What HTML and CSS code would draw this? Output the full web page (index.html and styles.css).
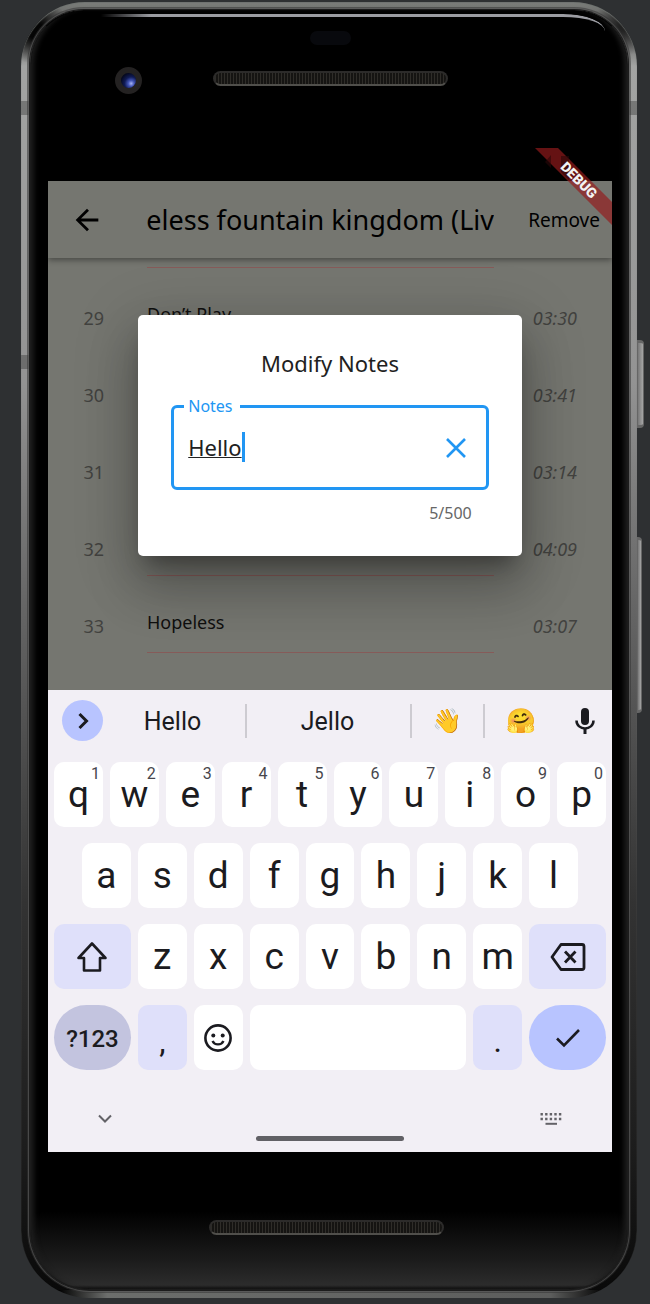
FILE: index.html
```html
<!DOCTYPE html>
<html lang="en">
<head>
<meta charset="utf-8">
<title>Modify Notes</title>
<link rel="stylesheet" href="styles.css">
</head>
<body>
<div class="phone">
  <span class="side-button power"></span>
  <span class="side-button volume"></span>
  <div class="glass">
    <div class="bezel bezel-top">
      <span class="sensor"></span>
      <span class="camera"></span>
      <span class="speaker"></span>
    </div>
    <div class="screen">
      <div class="status-bar"></div>
      <svg class="debug" viewBox="0 0 78 78" aria-label="Debug">
        <path d="M1 0H24L78 54V77Z" fill="#951a1c" fill-opacity=".68"/>
        <path d="M11 14L17 7V20ZM27 8H35V32L27 24Z" fill="#2c0608" fill-opacity=".6"/>
        <text x="45" y="37" transform="rotate(45 45 32)" text-anchor="middle">DEBUG</text>
      </svg>
      <main class="app">
        <header class="app-bar">
          <button class="back" aria-label="Back">
            <svg width="34" height="34" viewBox="0 0 24 24"><path d="M20 11H7.800l5.600-5.600L12 4l-8 8 8 8 1.400-1.400L7.800 13H20z" fill="#000"/></svg>
          </button>
          <h1 class="album"><span>eless fountain kingdom (Liv</span></h1>
          <button class="remove">Remove</button>
        </header>
        <ol class="tracks">
          <li class="track"><span class="number"></span><span class="name"></span><span class="time"></span></li>
          <li class="track"><span class="number">29</span><span class="name">Don’t Play</span><span class="time">03:30</span></li>
          <li class="track"><span class="number">30</span><span class="name"></span><span class="time">03:41</span></li>
          <li class="track"><span class="number">31</span><span class="name"></span><span class="time">03:14</span></li>
          <li class="track"><span class="number">32</span><span class="name"></span><span class="time">04:09</span></li>
          <li class="track"><span class="number">33</span><span class="name">Hopeless</span><span class="time">03:07</span></li>
        </ol>
        <div class="overlay">
          <section class="dialog" role="dialog" aria-labelledby="dialog-title">
            <h2 id="dialog-title">Modify Notes</h2>
            <div class="field">
              <label for="notes">Notes</label>
              <input id="notes" type="text" value="Hello" maxlength="500" spellcheck="false">
              <span class="caret"></span>
              <button class="clear" aria-label="Clear">
                <svg width="20" height="20" viewBox="0 0 20 20"><path d="M1 1L19 19M19 1L1 19" stroke="#2196f3" stroke-width="2.600"/></svg>
              </button>
            </div>
            <p class="counter">5/500</p>
          </section>
        </div>
      </main>
      <section class="keyboard" aria-label="Keyboard">
        <div class="suggestions">
          <button class="expand" aria-label="More"><svg width="20" height="20" viewBox="0 0 20 20"><path d="M6.500 3L13.500 10L6.500 17" fill="none" stroke="#1b1b20" stroke-width="3"/></svg></button>
          <button class="word">Hello</button>
          <button class="word split">Jello</button>
          <button class="emoji split">👋</button>
          <button class="emoji split">🤗</button>
          <button class="mic" aria-label="Voice input"><svg width="20" height="28" viewBox="0 0 20 28"><rect x="6" y="1" width="8" height="17" rx="4" fill="#1b1b20"/><path d="M1.500 13.500C1.500 24 18.500 24 18.500 13.500" fill="none" stroke="#1b1b20" stroke-width="2.500"/><path d="M10 21V27" stroke="#1b1b20" stroke-width="3"/></svg></button>
        </div>
        <div class="keys">
          <button class="key">q<sup>1</sup></button><button class="key">w<sup>2</sup></button><button class="key">e<sup>3</sup></button><button class="key">r<sup>4</sup></button><button class="key">t<sup>5</sup></button><button class="key">y<sup>6</sup></button><button class="key">u<sup>7</sup></button><button class="key">i<sup>8</sup></button><button class="key">o<sup>9</sup></button><button class="key">p<sup>0</sup></button>
          <button class="key indent">a</button><button class="key">s</button><button class="key">d</button><button class="key">f</button><button class="key">g</button><button class="key">h</button><button class="key">j</button><button class="key">k</button><button class="key">l</button>
          <button class="key wide tint first" aria-label="Shift"><svg width="34" height="34" viewBox="0 0 34 34"><path d="M17 3.500L30.500 18H25V30.500H9V18H3.500Z" fill="none" stroke="#1b1b20" stroke-width="2.600" stroke-linejoin="round"/></svg></button>
          <button class="key">z</button><button class="key">x</button><button class="key">c</button><button class="key">v</button><button class="key">b</button><button class="key">n</button><button class="key">m</button>
          <button class="key wide tint" aria-label="Backspace"><svg width="36" height="30" viewBox="0 0 36 30"><path d="M11 2.500H32Q34 2.500 34 4.500V25.500Q34 27.500 32 27.500H11L2 15Z" fill="none" stroke="#1b1b20" stroke-width="2.800" stroke-linejoin="round"/><path d="M15 9.500L25.500 20.500M25.500 9.500L15 20.500" stroke="#1b1b20" stroke-width="2.800"/></svg></button>
          <button class="key wide symbols">?123</button>
          <button class="key tint low">,</button>
          <button class="key" aria-label="Emoji"><svg width="28" height="28" viewBox="0 0 28 28"><circle cx="14" cy="14" r="12.600" fill="none" stroke="#1b1b20" stroke-width="2.600"/><circle cx="9.300" cy="11.500" r="2" fill="#1b1b20"/><circle cx="18.700" cy="11.500" r="2" fill="#1b1b20"/><path d="M8.500 17C10.500 21.500 17.500 21.500 19.500 17" fill="none" stroke="#1b1b20" stroke-width="2.300"/></svg></button>
          <button class="key space" aria-label="Space"></button>
          <button class="key tint low">.</button>
          <button class="key wide enter" aria-label="Done"><svg width="26" height="20" viewBox="0 0 26 20"><path d="M2 10.500L9 17.500L24 2" fill="none" stroke="#1b1b20" stroke-width="2.600"/></svg></button>
        </div>
        <div class="nav">
          <button aria-label="Hide keyboard"><svg width="14" height="10" viewBox="0 0 14 10"><path d="M1 1.500L7 7.500L13 1.500" fill="none" stroke="#636267" stroke-width="2"/></svg></button>
          <span class="handle"></span>
          <button aria-label="Switch keyboard"><svg width="22" height="14" viewBox="0 0 22 14"><path d="M0.500 2.300H22M0.500 7H22" stroke="#636267" stroke-width="2.400" stroke-dasharray="2.400 2.200"/><path d="M5.500 11.800H17" stroke="#636267" stroke-width="2"/></svg></button>
        </div>
      </section>
    </div>
    <div class="bezel bezel-bottom"><span class="speaker"></span></div>
  </div>
</div>
</body>
</html>
```
FILE: styles.css
```css
* {
  box-sizing: border-box;
}

body {
  margin: 0;
  padding: 2px 13px 6px 21px;
  background: #2e3032;
  font-family: "Noto Sans", sans-serif;
  color: #212121;
}

button {
  margin: 0;
  padding: 0;
  border: 0;
  background: none;
  color: inherit;
  font: inherit;
}

svg {
  display: block;
}

/* Handset */
.phone {
  position: relative;
  padding: 8px 9px;
  border-radius: 64px 64px 68px 68px;
  background:
    radial-gradient(circle at 14px 28px, #050505 8px, transparent 34px),
    radial-gradient(circle at calc(100% - 14px) 24px, #222 4px, transparent 30px),
    linear-gradient(to right, #000 6%, #6c6e6c 14%, #5c5d5c 86%, #000 95%) bottom / 100% 8px no-repeat,
    linear-gradient(#0004, #0004) 0 99px / 100% 14px no-repeat,
    linear-gradient(#0004, #0004) 0 353px / 9px 14px no-repeat,
    linear-gradient(to bottom, #7c7e7b 0, #555 28px, #a3a4a3 64px, #939393 380px, #666 600px, #333 900px, #1c1c1c 1150px, #080808 100%);
  box-shadow: inset 0 1px 1px #6f7370;
}

.glass {
  position: relative;
  padding: 0 15px 0 17px;
  border: 1px solid #1c1c1c;
  border-top-color: #050505;
  border-radius: 54px 54px 60px 60px;
  background: linear-gradient(to bottom, #000 0, #000 1200px, #1c1c1c 1250px, #2c2c2c 1274px, #111 100%);
  box-shadow: inset 7px 0 5px -4px #1d1d1d, inset -7px 0 5px -4px #1d1d1d, 0 0 0 1px #1c1c1c, 0 0 0 2px #6668, 0 0 0 3px #3338;
}

.glass::before {
  content: "";
  position: absolute;
  top: 3px;
  left: 70px;
  right: 22px;
  height: 17px;
  border-top: 3px solid #9b9ca2;
  border-top-right-radius: 42px 17px;
  mask-image: linear-gradient(to right, transparent, #000 50px);
}

.side-button {
  position: absolute;
  left: 100%;
  border: 1px solid #666;
  border-width: 3px 1px;
  border-radius: 0 4px 4px 0;
  background: linear-gradient(to right, #777, #a5a5a5);
}

.power {
  top: 338px;
  width: 7px;
  height: 88px;
}

.volume {
  top: 535px;
  width: 5px;
  height: 176px;
}

.bezel {
  display: grid;
  grid-template-columns: 1fr auto 1fr;
  justify-items: center;
  align-content: start;
  height: 137px;
}

.bezel-top {
  padding-top: 20px;
  row-gap: 22px;
  align-items: center;
}

.bezel-bottom {
  padding: 68px 8px 0 0;
}

.sensor {
  grid-column: 2;
  width: 41px;
  height: 14px;
  border-radius: 7px;
  background: #08090d;
}

.camera {
  grid-column: 1;
  width: 27px;
  height: 27px;
  margin-right: 4px;
  border: 6px solid #242222;
  border-radius: 50%;
  background: radial-gradient(circle at 68% 70%, #a9b5f5 0, #4356b8 20%, #101b55 45%, #05081d 75%);
}

.speaker {
  grid-column: 2;
  width: 235px;
  height: 15px;
  border: 2px solid #2c2b2a;
  border-bottom-color: #504f4b;
  border-radius: 8px;
  background: repeating-linear-gradient(to right, #2f2d29 0 1px, #151412 1px 3px);
}

.bezel-top .speaker {
  margin-top: -4px;
}

/* Screen */
.screen {
  position: relative;
}

.status-bar {
  height: 33px;
  background: #000;
}

.debug {
  position: absolute;
  z-index: 2;
  top: 0;
  right: 0;
  width: 78px;
  height: 78px;
}

.debug text {
  fill: #f3f3f3;
  font: 900 14px Roboto, sans-serif;
}

.app {
  position: relative;
  display: flex;
  flex-direction: column;
  height: 509px;
  background: #757670;
}

.app-bar {
  position: relative;
  display: grid;
  grid-template-columns: 99px 1fr 118px;
  align-items: center;
  height: 77px;
  color: #000;
  box-shadow: 0 2px 6px #0006;
}

.back {
  justify-self: start;
  margin-left: 22px;
}

.album {
  display: flex;
  justify-content: flex-end;
  overflow: hidden;
  margin: 0;
  font-size: 27px;
  font-weight: 400;
  line-height: 40px;
  white-space: nowrap;
}

.remove {
  justify-self: end;
  margin-right: 12px;
  font-size: 19px;
}

.tracks {
  display: flex;
  flex: 1;
  flex-direction: column;
  justify-content: flex-end;
  overflow: hidden;
  min-height: 0;
  margin: 0;
  padding: 0 0 25px;
  list-style: none;
}

.track {
  display: grid;
  flex: none;
  grid-template-columns: 56px 43px 1fr 118px;
  height: 77px;
  font-size: 18px;
  line-height: 24px;
}

.number {
  padding-top: 26px;
  text-align: right;
  color: #42423f;
}

.name {
  grid-column: 3;
  height: 65px;
  padding-top: 22px;
  border-bottom: 1px solid #865b59;
  color: #10100f;
}

.time {
  padding: 26px 35px 0 0;
  text-align: right;
  font-style: italic;
  color: #42423f;
}

.overlay {
  position: absolute;
  inset: 0;
  display: flex;
  align-items: center;
  justify-content: center;
}

/* Dialog */
.dialog {
  width: 68%;
  padding: 32px 33px;
  border-radius: 5px;
  background: #fff;
  box-shadow: 0 15px 20px -9px #0005, 0 32px 50px 4px #0003, 0 12px 60px 10px #0002;
}

.dialog h2 {
  margin: 0 0 26px;
  font-size: 22px;
  font-weight: 400;
  line-height: 32px;
  text-align: center;
}

.field {
  position: relative;
  display: flex;
  align-items: center;
  height: 85px;
  padding: 0 20px 2px 14px;
  border: 3px solid #2196f3;
  border-radius: 6px;
}

.field label {
  position: absolute;
  top: -13px;
  left: 10px;
  padding: 0 7px 0 4px;
  background: #fff;
  color: #2196f3;
  font-size: 16px;
  line-height: 22px;
}

.field input {
  field-sizing: content;
  max-width: 70%;
  padding: 0;
  border: 0;
  outline: 0;
  background: none;
  color: #212121;
  font: 22px/30px "Noto Sans", sans-serif;
  text-decoration: underline 1px;
}

.caret {
  width: 3px;
  height: 30px;
  background: #2196f3;
}

.clear {
  margin: 2px 0 0 auto;
}

.counter {
  margin: 12px 17px 0 0;
  font-size: 16px;
  line-height: 22px;
  text-align: right;
  color: #666;
}

/* Keyboard */
.keyboard {
  position: relative;
  padding: 0 6px;
  background: #f2eff5;
  color: #1b1b20;
  font-family: Roboto, sans-serif;
}

.suggestions {
  display: grid;
  grid-template-columns: 56px 135px 165px 73px 76px 1fr;
  align-items: center;
  height: 61px;
  margin-bottom: 11px;
  font-size: 25px;
}

.suggestions > * {
  justify-self: stretch;
  height: 34px;
}

.suggestions .expand {
  display: grid;
  place-items: center;
  width: 41px;
  height: 41px;
  margin-left: 8px;
  border-radius: 50%;
  background: #b8c4ff;
}

.word {
  padding: 2px 10px 0 0;
}

.split {
  padding-right: 2px;
  border-left: 2px solid #cdcbd1;
}

.emoji {
  font-size: 24px;
}

.mic {
  display: grid;
  place-items: center;
  padding-left: 4px;
}

.keys {
  display: grid;
  grid-template-columns: repeat(20, 1fr);
  grid-auto-rows: 65px;
  gap: 16px 7px;
}

.key {
  position: relative;
  display: grid;
  grid-column: span 2;
  place-items: center;
  min-width: 0;
  border-radius: 10px;
  background: #fff;
  font-size: 37px;
  line-height: 64px;
}

.key sup {
  position: absolute;
  top: 4px;
  right: 3px;
  color: #47464c;
  font-size: 16px;
  line-height: 16px;
}

.indent {
  grid-column: 2 / span 2;
}

.wide {
  grid-column: span 3;
}

.first {
  grid-column: 1 / span 3;
}

.space {
  grid-column: span 8;
}

.tint {
  background: #dfe0fa;
}

.symbols {
  padding-top: 2px;
  border-radius: 33px;
  background: #c3c4df;
  font-size: 24px;
  font-weight: 500;
}

.enter {
  border-radius: 33px;
  background: #b8c4ff;
}

.low {
  padding-top: 6px;
  font-size: 32px;
  line-height: 40px;
}

.nav {
  display: grid;
  grid-template-columns: 1fr 148px 1fr;
  height: 82px;
  padding: 0 44px;
}

.nav button {
  align-self: center;
  padding-top: 16px;
}

.nav button:last-child {
  justify-self: end;
}

.nav button:first-child {
  justify-self: start;
}

.handle {
  align-self: end;
  height: 5px;
  margin-bottom: 11px;
  border-radius: 3px;
  background: #616065;
}
```
